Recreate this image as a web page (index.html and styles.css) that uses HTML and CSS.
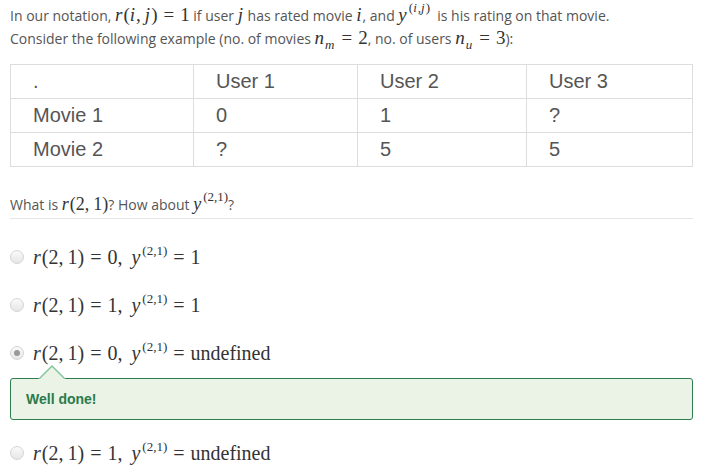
FILE: index.html
```html
<!DOCTYPE html>
<html lang="en">

<head>
    <meta charset="UTF-8">
    <title>Quiz - Recommender Systems</title>
    <link rel="stylesheet" href="styles.css">
</head>

<body>
    <p class="intro">
        In our notation, <span class="m"><i>r</i>(<i>i</i>,<span class="c"></span><i>j</i>)<span class="eq">=</span>1</span> if user <span class="m"><i>j</i></span> has rated movie <span class="m"><i>i</i></span>, and <span class="m"><i>y</i><sup>(<i>i</i>,<i>j</i>)</sup></span> &nbsp;is his rating on that movie.<br>
        Consider the following example (no. of movies <span class="m"><i>n</i><sub><i>m</i></sub><span class="eq">=</span>2</span>, no. of users <span class="m"><i>n</i><sub><i>u</i></sub><span class="eq">=</span>3</span>):
    </p>

    <table class="ratings">
        <colgroup>
            <col class="col-1">
            <col class="col-2">
            <col class="col-3">
            <col class="col-4">
        </colgroup>
        <tr>
            <td>.</td>
            <td>User 1</td>
            <td>User 2</td>
            <td>User 3</td>
        </tr>
        <tr>
            <td>Movie 1</td>
            <td>0</td>
            <td>1</td>
            <td>?</td>
        </tr>
        <tr>
            <td>Movie 2</td>
            <td>?</td>
            <td>5</td>
            <td>5</td>
        </tr>
    </table>

    <div class="question">
        What is <span class="m"><i>r</i>(2,<span class="c"></span>1)</span>? How about <span class="m"><i>y</i><sup>(2,1)</sup></span>?
    </div>

    <div class="options">
        <label class="option">
            <span class="radio"></span>
            <span class="m big"><i>r</i>(2,<span class="c"></span>1)<span class="eq">=</span>0,<span class="q"></span><i>y</i><sup>(2,1)</sup><span class="eq">=</span>1</span>
        </label>
        <label class="option">
            <span class="radio"></span>
            <span class="m big"><i>r</i>(2,<span class="c"></span>1)<span class="eq">=</span>1,<span class="q"></span><i>y</i><sup>(2,1)</sup><span class="eq">=</span>1</span>
        </label>
        <label class="option">
            <span class="radio checked"></span>
            <span class="m big"><i>r</i>(2,<span class="c"></span>1)<span class="eq">=</span>0,<span class="q"></span><i>y</i><sup>(2,1)</sup><span class="eq">=</span>undefined</span>
        </label>
        <div class="feedback">Well done!</div>
        <label class="option last">
            <span class="radio"></span>
            <span class="m big"><i>r</i>(2,<span class="c"></span>1)<span class="eq">=</span>1,<span class="q"></span><i>y</i><sup>(2,1)</sup><span class="eq">=</span>undefined</span>
        </label>
    </div>
</body>

</html>
```

FILE: styles.css
```css
body {
    font-family: "Open Sans", Arial, sans-serif;
    font-size: 14px;
    color: #555;
    margin: 0;
    padding: 0 10px;
    background: #fff;
}

.intro {
    margin: 0;
    padding-top: 4px;
    line-height: 22px;
}

/* math bits, MathJax-like */
.m {
    font-family: "Liberation Serif", "DejaVu Serif", serif;
    font-size: 19px;
    color: #333;
    white-space: nowrap;
}

.m i {
    font-style: italic;
    padding-right: 1px;
}

.m .eq {
    margin: 0 6px;
}

.m .c {
    display: inline-block;
    width: 4px;
}

.m .q {
    display: inline-block;
    width: 9px;
}

.m sup,
.m sub {
    font-size: 13px;
    line-height: 0;
}

.m sup {
    vertical-align: 9px;
    margin-left: 1px;
}

.ratings {
    width: 682px;
    margin-top: 14px;
    border-collapse: collapse;
    table-layout: fixed;
    font-family: "Liberation Sans", Arial, sans-serif;
    font-size: 20px;
    color: #555;
}

.col-1 { width: 183px; }
.col-2 { width: 164px; }
.col-3 { width: 169px; }
.col-4 { width: 166px; }

.ratings td {
    border: 1px solid #ddd;
    height: 33px;
    padding: 0 0 0 22px;
}

.question {
    margin-top: 27px;
    padding-bottom: 3px;
    border-bottom: 1px solid #e5e5e5;
    font-size: 14px;
    line-height: 20px;
}

.question .m {
    font-size: 18px;
}

.options {
    padding-top: 23px;
}

.option {
    display: flex;
    align-items: center;
    gap: 9px;
    height: 30px;
    margin-bottom: 18px;
}

.option.last {
    margin-top: 18px;
}

.radio {
    width: 12px;
    height: 12px;
    border: 1px solid #d4d4d4;
    border-radius: 50%;
    background: linear-gradient(#fafafa, #e6e6e6);
    display: flex;
    align-items: center;
    justify-content: center;
}

.radio.checked::after {
    content: "";
    width: 6px;
    height: 6px;
    border-radius: 50%;
    background: #999;
}

.m.big {
    font-size: 20px;
}

.feedback {
    position: relative;
    margin-top: -8px;
    height: 40px;
    line-height: 40px;
    padding-left: 15px;
    background: #eaf3e6;
    border: 1px solid #2e7d4f;
    border-radius: 3px;
    color: #2a7a4a;
    font-family: "Liberation Sans", Arial, sans-serif;
    font-weight: bold;
    font-size: 14px;
}

.feedback::before,
.feedback::after {
    content: "";
    position: absolute;
    left: 27px;
    border-style: solid;
    border-color: transparent;
}

.feedback::before {
    top: -14px;
    border-width: 0 14px 14px 14px;
    border-bottom-color: #7fc49a;
}

.feedback::after {
    top: -12px;
    left: 28px;
    border-width: 0 13px 13px 13px;
    border-bottom-color: #eaf3e6;
}
```
